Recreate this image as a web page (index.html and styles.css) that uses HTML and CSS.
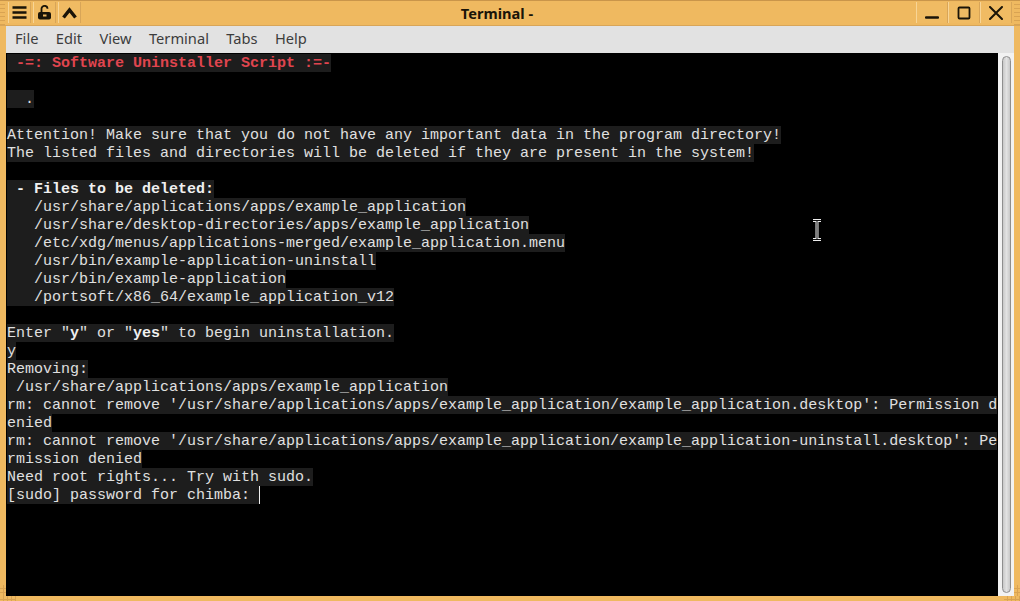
FILE: index.html
```html
<!DOCTYPE html>
<html lang="en">
<head>
<meta charset="utf-8">
<title>Terminal</title>
<link rel="stylesheet" href="styles.css">
</head>
<body>
<div class="window">
  <div class="grip lines tl"></div>
  <div class="grip lines tr"></div>
  <div class="grip grid bl-v"></div>
  <div class="grip grid bl-h"></div>
  <div class="grip grid br-v"></div>
  <div class="grip grid br-h"></div>
  <header class="titlebar">
    <div class="btns left">
      <div class="btn"><svg width="15" height="13" viewBox="0 0 15 13"><path d="M.5 1.500h14M.5 6.500h14M.5 11.500h14" stroke="#1a1408" stroke-width="2.400" fill="none"/></svg></div>
      <div class="btn"><svg width="15" height="15" viewBox="0 0 15 15"><path d="M4.500 7V4a3 3 0 0 1 6-.3" stroke="#1a1408" stroke-width="1.800" fill="none"/><rect x="1" y="7" width="13" height="7.500" rx="2" fill="#1a1408"/><rect x="6" y="9.500" width="3.500" height="2" fill="#eeb65f"/></svg></div>
      <div class="btn"><svg width="15" height="12" viewBox="0 0 15 12"><path d="M1.500 10.500l6-7.500 6 7.500" stroke="#1a1408" stroke-width="3.400" fill="none"/></svg></div>
    </div>
    <div class="title">Terminal -</div>
    <div class="btns right">
      <div class="btn wide"><svg width="14" height="14" viewBox="0 0 14 14"><path d="M1 11.500h12" stroke="#1a1408" stroke-width="2.400" stroke-linecap="round"/></svg></div>
      <div class="btn wide"><svg width="14" height="14" viewBox="0 0 14 14"><rect x="1.500" y="1.500" width="11" height="11" rx="1" stroke="#1a1408" stroke-width="1.800" fill="none"/></svg></div>
      <div class="btn wide"><svg width="14" height="14" viewBox="0 0 14 14"><path d="M1 1l12 12M13 1L1 13" stroke="#1a1408" stroke-width="2" stroke-linecap="round"/></svg></div>
    </div>
  </header>
  <nav class="menubar">
    <span class="menu">File</span><span class="menu">Edit</span><span class="menu">View</span><span class="menu">Terminal</span><span class="menu">Tabs</span><span class="menu">Help</span>
  </nav>
  <main class="content">
    <div class="term">
      <div class="row"><span class="hl red"> -=: Software Uninstaller Script :=-</span></div>
      <div class="row"></div>
      <div class="row"><span class="hl">  .</span></div>
      <div class="row"></div>
      <div class="row"><span class="hl">Attention! Make sure that you do not have any important data in the program directory!</span></div>
      <div class="row"><span class="hl">The listed files and directories will be deleted if they are present in the system!</span></div>
      <div class="row"></div>
      <div class="row"><span class="hl"> <b>- Files to be deleted:</b></span></div>
      <div class="row"><span class="hl">   /usr/share/applications/apps/example_application</span></div>
      <div class="row"><span class="hl">   /usr/share/desktop-directories/apps/example_application</span></div>
      <div class="row"><span class="hl">   /etc/xdg/menus/applications-merged/example_application.menu</span></div>
      <div class="row"><span class="hl">   /usr/bin/example-application-uninstall</span></div>
      <div class="row"><span class="hl">   /usr/bin/example-application</span></div>
      <div class="row"><span class="hl">   /portsoft/x86_64/example_application_v12</span></div>
      <div class="row"></div>
      <div class="row"><span class="hl">Enter "<b>y</b>" or "<b>yes</b>" to begin uninstallation.</span></div>
      <div class="row"><span class="hl">y</span></div>
      <div class="row"><span class="hl">Removing:</span></div>
      <div class="row"><span class="hl"> /usr/share/applications/apps/example_application</span></div>
      <div class="row"><span class="hl">rm: cannot remove '/usr/share/applications/apps/example_application/example_application.desktop': Permission d</span></div>
      <div class="row"><span class="hl">enied</span></div>
      <div class="row"><span class="hl">rm: cannot remove '/usr/share/applications/apps/example_application/example_application-uninstall.desktop': Pe</span></div>
      <div class="row"><span class="hl">rmission denied</span></div>
      <div class="row"><span class="hl">Need root rights... Try with sudo.</span></div>
      <div class="row"><span class="hl">[sudo] password for chimba: </span><span class="caret"></span></div>
      <svg class="ibeam" width="10" height="22" viewBox="0 0 10 22"><path d="M1 1.500h8M1 20.500h8M5 1.500v19" stroke="#eee" stroke-width="3" fill="none"/><path d="M1 1.500h8M1 20.500h8M5 1.500v19" stroke="#111" stroke-width="1" fill="none"/></svg>
    </div>
    <div class="scrollbar"><div class="thumb"></div></div>
  </main>
</div>
</body>
</html>
```
FILE: styles.css
```css
* { box-sizing: border-box; }
html, body { margin: 0; height: 100%; background: #000; overflow: hidden; }
.window {
  width: 1020px;
  height: 601px;
  position: relative;
  display: flex;
  flex-direction: column;
  background: #efb960;
  padding: 0 6px 5px;
  border-top: 1px solid #c9954a;
}
.grip { position: absolute; }
.lines { background: repeating-linear-gradient(to bottom, #efb960 0 3px, #d9a352 3px 4px); }
.grid {
  background:
    repeating-linear-gradient(to bottom, transparent 0 3px, #d9a352 3px 4px),
    repeating-linear-gradient(to right, transparent 0 3px, #d9a352 3px 4px);
}
.tl { left: 0; top: 0; width: 5px; height: 24px; }
.tr { right: 0; top: 0; width: 6px; height: 24px; }
.bl-v { left: 0; bottom: 5px; width: 6px; height: 11px; }
.bl-h { left: 0; bottom: 0; width: 16px; height: 5px; }
.br-v { right: 0; bottom: 5px; width: 6px; height: 11px; }
.br-h { right: 0; bottom: 0; width: 16px; height: 5px; }
.titlebar {
  height: 25px;
  margin: 0 -6px;
  padding: 1px 8px 0;
  display: flex;
  align-items: flex-start;
  justify-content: space-between;
  border-bottom: 1px solid #d8a558;
}
.btns { display: flex; }
.btns.left { gap: 2px; }
.btn {
  width: 23px;
  height: 21px;
  display: flex;
  align-items: center;
  justify-content: center;
  border-right: 1px solid #d8a558;
  border-left: 1px solid #f8d596;
  background: #f0bb63;
}
.btn.wide { width: 32px; }
.title {
  font: bold 14.6px "Noto Sans", sans-serif;
  color: #1a1408;
  line-height: 22px;
  flex: 1;
  padding-right: 3px;
  text-align: center;
}
.menubar {
  height: 27px;
  background: #e2e2e2;
  display: flex;
  align-items: center;
  padding-left: 1px;
  padding-bottom: 3px;
  font: 14.67px "Noto Sans", sans-serif;
  color: #3c3c3c;
}
.menu { padding: 0 8px; margin-right: 1.400px; }
.content { flex: 1; display: flex; min-height: 0; }
.term {
  flex: 1;
  background: #000;
  padding: 1px 0 0 1px;
  position: relative;
  font: 15px/18px "Liberation Mono", monospace;
  color: #e0e0e0;
}
.row { height: 18px; display: flex; }
.hl { background: #1d1d1d; height: 18px; line-height: 19px; display: block; white-space: pre; }
.hl b { font-weight: bold; color: #f0f0f0; }
.red { color: #e0454f; font-weight: bold; }
.caret { width: 1px; height: 18px; background: #f0f0f0; }
.ibeam { position: absolute; left: 806px; top: 166px; }
.scrollbar {
  width: 16px;
  background: #f2f2f2;
  padding: 3px 3px 3px 4px;
}
.thumb {
  height: 100%;
  background: linear-gradient(to right, #c8c8c8, #e2e2e2 50%, #c8c8c8);
  border: 1px solid #8e8e8e;
  border-radius: 5px;
}
```
